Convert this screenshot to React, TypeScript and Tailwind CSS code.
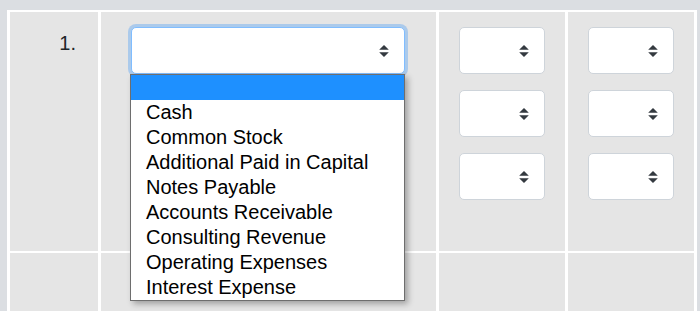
import React from "react";

const Arrows = () => (
  <svg width="10" height="12" viewBox="0 0 4 5" className="shrink-0">
    <path d="M2 0L0 2h4zm0 5L0 3h4z" fill="#343a40" />
  </svg>
);

const SmallSelect = () => (
  <div className="w-[86px] h-[47px] bg-white border border-[#ced4da] rounded-[5px] flex items-center justify-end pr-[15px]">
    <Arrows />
  </div>
);

const options = [
  "",
  "Cash",
  "Common Stock",
  "Additional Paid in Capital",
  "Notes Payable",
  "Accounts Receivable",
  "Consulting Revenue",
  "Operating Expenses",
  "Interest Expense",
];

export default function App() {
  return (
    <div
      className="w-[700px] h-[311px] overflow-hidden bg-[#dbdee2] pt-[10px] pl-[7px]"
      style={{ fontFamily: '"Liberation Sans", Arial, sans-serif' }}
    >
      <div className="w-[690px] bg-white pt-[2px] px-[3px] grid grid-cols-[88px_335px_126px_126px] gap-x-[3px] gap-y-[2px]">
        <div className="h-[239px] bg-[#e5e5e5] text-right pr-[22px] pt-[16px] text-[20px] leading-[30px] text-[#212529]">
          1.
        </div>
        <div className="h-[239px] bg-[#e5e5e5] relative pt-[15px] pl-[30px]">
          <div className="w-[274px] h-[47px] bg-white border border-[#80bdff] rounded-[5px] shadow-[0_0_0_3px_rgba(0,123,255,0.25)] flex items-center justify-end pr-[15px]">
            <Arrows />
          </div>
          <div className="absolute left-[29px] top-[62px] w-[275px] bg-white border border-[#6e6e6e] shadow-[3px_3px_6px_rgba(0,0,0,0.3)] z-10">
            {options.map((o, i) => (
              <div
                key={i}
                className={
                  "h-[25px] pl-[15px] text-[20px] leading-[25px] text-black whitespace-nowrap " +
                  (i === 0 ? "bg-[#1e90ff]" : "")
                }
              >
                {o}
              </div>
            ))}
          </div>
        </div>
        <div className="h-[239px] bg-[#e5e5e5] pt-[15px] flex flex-col items-center gap-[16px]">
          <SmallSelect />
          <SmallSelect />
          <SmallSelect />
        </div>
        <div className="h-[239px] bg-[#e5e5e5] pt-[15px] flex flex-col items-center gap-[16px]">
          <SmallSelect />
          <SmallSelect />
          <SmallSelect />
        </div>
        <div className="h-[60px] bg-[#e5e5e5]" />
        <div className="h-[60px] bg-[#e5e5e5]" />
        <div className="h-[60px] bg-[#e5e5e5]" />
        <div className="h-[60px] bg-[#e5e5e5]" />
      </div>
    </div>
  );
}
